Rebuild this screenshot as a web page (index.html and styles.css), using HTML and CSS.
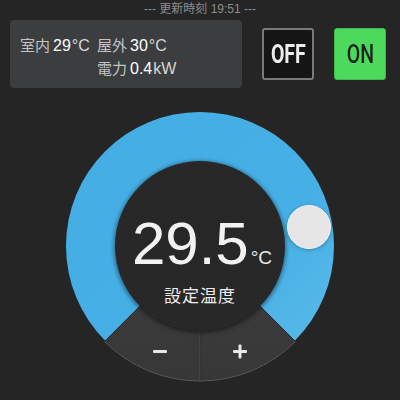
FILE: index.html
```html
<!DOCTYPE html>
<html>
<head>
<meta charset="utf-8">
<link rel="stylesheet" href="styles.css">
</head>
<body>
<div class="app">
  <div class="updated">--- 更新時刻 19:51 ---</div>
  <div class="top">
    <div class="card">
      <div class="cell"><span class="lbl">室内</span><span class="val">29<span class="unit">°C</span></span></div>
      <div class="cell"><span class="lbl">屋外</span><span class="val">30<span class="unit">°C</span></span></div>
      <div class="cell"></div>
      <div class="cell"><span class="lbl">電力</span><span class="val">0.4<span class="unit">kW</span></span></div>
    </div>
    <div class="btn off"><span class="btxt">OFF</span></div>
    <div class="btn on"><span class="btxt">ON</span></div>
  </div>
  <div class="dial">
    <svg class="dial-svg" width="280" height="280" viewBox="0 0 280 280">
      <defs>
        <linearGradient id="ring" x1="0" y1="0" x2="1" y2="1">
          <stop offset="0" stop-color="#44ade3"/>
          <stop offset="0.6" stop-color="#46afe5"/>
          <stop offset="1" stop-color="#5cbcea"/>
        </linearGradient>
        <linearGradient id="seg" x1="0" y1="0" x2="0" y2="1">
          <stop offset="0" stop-color="#3b3b3b"/>
          <stop offset="1" stop-color="#373737"/>
        </linearGradient>
        <pattern id="stripes" width="3" height="3" patternUnits="userSpaceOnUse" patternTransform="rotate(45)">
          <rect width="3" height="3" fill="#262626"/>
          <rect width="1" height="3" fill="#2b2b2b"/>
        </pattern>
        <filter id="sh" x="-20%" y="-20%" width="140%" height="140%">
          <feGaussianBlur stdDeviation="2"/>
        </filter>
      </defs>
      <circle cx="140" cy="140" r="134" fill="url(#ring)"/>
      <path d="M 235.46 235.46 A 135 135 0 0 1 44.54 235.46 L 79.9 200.1 A 85 85 0 0 0 200.1 200.1 Z" fill="url(#seg)" stroke="#2c2c2c" stroke-width="1"/>
      <path d="M 235.46 235.46 A 135 135 0 0 1 44.54 235.46" fill="none" stroke="#555a5e" stroke-width="1"/>
      <line x1="140" y1="224" x2="140" y2="274" stroke="#4a4a4a" stroke-width="1"/>
      <line x1="141" y1="224" x2="141" y2="274" stroke="#2e2e2e" stroke-width="1"/>
      <circle cx="140" cy="141" r="86" fill="#000" opacity="0.45" filter="url(#sh)"/>
      <circle cx="140" cy="140" r="85" fill="url(#stripes)"/>
      <rect x="93" y="244" width="14" height="3" rx="1" fill="#e8e8e8"/>
      <rect x="173" y="244" width="14" height="3" rx="1" fill="#e8e8e8"/>
      <rect x="178.5" y="238.5" width="3" height="14" rx="1" fill="#e8e8e8"/>
      <circle cx="249" cy="122" r="22" fill="#000" opacity="0.25" filter="url(#sh)"/>
      <circle cx="249" cy="121" r="21.5" fill="#e6e6e6" stroke="#f5f5f5" stroke-width="1"/>
    </svg>
    <div class="readout">
      <div class="temp"><span class="num">29.5</span><span class="deg">°C</span></div>
      <div class="caption">設定温度</div>
    </div>
  </div>
</div>
</body>
</html>
```

FILE: styles.css
```css
html, body {
  margin: 0;
  padding: 0;
  background: #252525;
}
.app {
  width: 400px;
  height: 400px;
  overflow: hidden;
  font-family: "Liberation Sans", "Noto Sans CJK JP", sans-serif;
  color: #fff;
}
.updated {
  height: 18px;
  padding-top: 1px;
  box-sizing: border-box;
  line-height: 17px;
  text-align: center;
  font-size: 12px;
  color: #8c8c8c;
  font-family: "Liberation Sans", "Noto Sans CJK JP", sans-serif;
}
.top {
  display: flex;
  align-items: flex-start;
  padding: 2px 14px 0 10px;
  gap: 20px;
}
.card {
  box-sizing: border-box;
  width: 233px;
  height: 68px;
  background: #3b3d3f;
  border-radius: 4px;
  padding: 13px 0 0 10px;
  display: grid;
  grid-template-columns: 77px auto;
  grid-template-rows: 23px 23px;
  font-size: 16px;
}
.cell {
  white-space: nowrap;
  display: flex;
  align-items: baseline;
  gap: 3px;
  height: 23px;
  line-height: 23px;
}
.lbl {
  color: #c4c4c4;
  font-family: "Noto Sans CJK JP", sans-serif;
  font-size: 15px;
}
.val { color: #fff; }
.unit { color: #d8d8d8; margin-left: 1px; }
.btn {
  box-sizing: border-box;
  width: 52px;
  height: 52px;
  margin-top: 8px;
  border-radius: 3px;
  display: flex;
  align-items: center;
  justify-content: center;
  font-family: "Roboto", sans-serif;
  font-size: 25px;
}
.btxt {
  display: inline-block;
  transform: scaleX(0.78);
}
.btn.off {
  background: #151515;
  border: 2px solid #7a7a7a;
  color: #eee;
  font-weight: 700;
}
.btn.on {
  background: #4cd95c;
  border: 1px solid #3fb84d;
  color: #1b241c;
  font-weight: 500;
}
.dial {
  position: relative;
  width: 280px;
  height: 280px;
  margin: 18px auto 0;
}
.dial-svg { display: block; }
.readout {
  position: absolute;
  left: 0;
  top: 0;
  width: 280px;
  text-align: center;
}
.temp {
  margin-top: 109px;
  height: 58px;
  line-height: 58px;
  padding-left: 4px;
}
.num {
  font-family: "Liberation Sans", sans-serif;
  font-size: 60px;
  color: #f2f2f2;
}
.deg {
  font-family: "Liberation Sans", sans-serif;
  font-size: 19px;
  color: #e8e8e8;
  margin-left: 2px;
}
.caption {
  margin-top: 9px;
  font-family: "Noto Sans CJK JP", sans-serif;
  font-size: 17px;
  color: #eee;
  letter-spacing: 1px;
}
```
